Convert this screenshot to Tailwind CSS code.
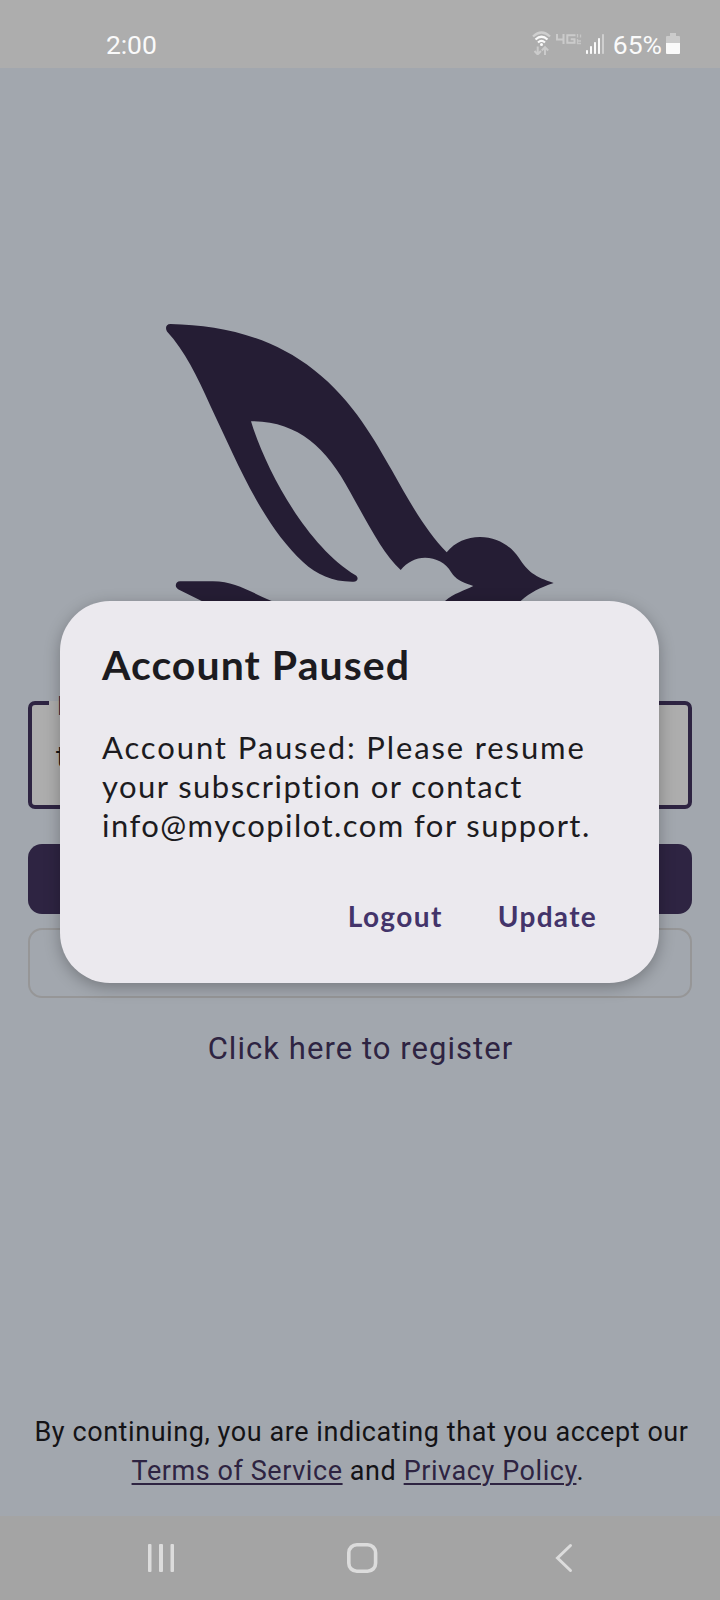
<!DOCTYPE html>
<html lang="en">
<head>
<meta charset="utf-8">
<title>Account Paused</title>
<script src="https://cdn.jsdelivr.net/npm/@tailwindcss/browser@4"></script>
</head>
<body class="bg-[#a2a7ae]">
<div class="relative flex h-[1600px] w-[720px] flex-col overflow-hidden bg-[#a2a7ae] font-['Roboto',sans-serif]">
  <!-- status bar -->
  <header class="flex h-[68px] shrink-0 items-start bg-[#adadad] pl-[106px] pr-[40px] pt-[29px] text-[26.5px] leading-[32px] text-[#fafafa]">
    <span class="tracking-[-0.1px]">2:00</span>
    <svg class="ml-auto h-[26px] w-[50px] shrink-0" viewBox="532 29 50 26" fill="none">
      <path d="M533 36.5Q541.500 28.500 550 36.500" stroke="#cfcfcf" stroke-width="2.300"/>
      <path d="M535.500 39.500Q541.500 34 547.500 39.500M538 42.500Q541.500 39.300 545 42.500" stroke="#fafafa" stroke-width="2.200"/>
      <circle cx="541.500" cy="44.500" r="1.500" fill="#fafafa"/>
      <path d="M537.700 46.500V54M534.500 51l3.200 3.400 3.200-3.400M545 55V47.500M541.800 50.500l3.200-3.400 3.200 3.400" stroke="#cbcbcb" stroke-width="2"/>
      <path d="M557 34v5.500h6.500M563.500 34v10M575.500 35.200h-8.200v7.600h7.200v-3.600h-3.800" stroke="#cbcbcb" stroke-width="2"/>
      <path d="M577.500 34v3.500M580.500 34.500v3M577.500 39v4.500h3.500M578 41h3" stroke="#c6c6c6" stroke-width="1.300"/>
    </svg>
    <svg class="ml-1 mt-[5px] h-[20px] w-[18px] shrink-0" viewBox="0 0 18 20" fill="#fafafa">
      <rect y="16" width="2" height="4" rx=".8"/><rect x="4" y="12" width="2" height="8" rx=".8"/><rect x="8" y="8" width="2" height="12" rx=".8"/><rect x="12" y="4" width="2" height="16" rx=".8"/><rect x="16" width="2" height="20" rx=".8" fill="#cfcfcf"/>
    </svg>
    <span class="ml-[9px] tracking-[0px]">65%</span>
    <svg class="ml-[4px] mt-[4px] h-[22px] w-[14px] shrink-0" viewBox="0 0 14 22">
      <path d="M4 0h6v3h3q1 0 1 1v6H0V4q0-1 1-1h3z" fill="#cbcbcb"/><path d="M0 10h14v10q0 1-1 1H1q-1 0-1-1z" fill="#fafafa"/>
    </svg>
  </header>

  <!-- login screen -->
  <main class="flex flex-1 flex-col px-7 pt-[252px]">
    <svg class="ml-[132px] h-[300px] w-[400px] shrink-0" viewBox="160 320 400 300" fill="#251d34">
      <path d="M170.500 324C222 325 272 337 314 370C354 401 376 443 391.700 470C410 503 426 531 446.700 552.300C455 542 467 537 480 537C497 537 511 546 519 558C527 571 535 577 553.700 583C539 588 531 592 520.700 601L505 620H430L445 601C454 593 464 591 473.300 586C459 581 456 579 451 572C446 563 436 557.700 425 557.700C416 557.700 407 562 400.700 570C383 554 367 522 350 491.700C326 447 297 421 251 421.300C265 467 305 545 356 575.500C359 578 357.500 581.700 353.500 581.700C333 582 317 575 303.300 562.300C262 524 238 464 210 405C197 376 185 351 167 331.500C165 328 166 324 170.500 324Z"/>
      <path d="M180 581.200H213C235 581.200 248 591 271.700 601L310 618H240L201.700 601L178.500 589.500C174 587 175.500 581.200 180 581.200Z"/>
    </svg>
    <div class="relative mt-[81px] h-[108px] shrink-0 rounded-[7px] border-4 border-[#2e2442] bg-[#adadad] pl-6 pt-[32px] text-[30px] leading-[40px] text-[#171619]">
      <span class="absolute left-[17px] top-[-4px] h-1 w-20 bg-[#adadad]"></span>
      <span class="absolute left-[25px] top-[-17px] text-[26px] leading-[36px] text-[#2e2442]">Email</span>
      <span>t</span>
    </div>
    <div class="mt-[35px] h-[70px] shrink-0 rounded-[14px] bg-[#2e2442]"></div>
    <div class="mt-[14px] h-[70px] shrink-0 rounded-[14px] border-2 border-[#969697]"></div>
    <a class="mt-[31px] pl-px text-center text-[31px] leading-[40px] tracking-[1.050px] text-[#2e2442]">Click here to register</a>
    <p class="-mx-6 mb-[25px] mt-auto whitespace-nowrap pl-[3px] text-center text-[27px] leading-[39px] tracking-[0.570px] text-[#141316]">By continuing, you are indicating that you accept our<br><a class="text-[#2e2442] underline decoration-2 underline-offset-[3px]">Terms of Service</a> and <a class="text-[#2e2442] underline decoration-2 underline-offset-[3px]">Privacy Policy</a>.&nbsp;</p>
  </main>

  <!-- system navigation -->
  <nav class="flex h-[84px] shrink-0 items-center bg-[#a4a4a4] pl-[147px] text-[#dcdcdc]">
    <svg class="h-[30px] w-[28px]" viewBox="0 0 28 30" fill="currentColor"><rect x="1" y="1" width="3.500" height="28" rx="1"/><rect x="12" y="1" width="4" height="28" rx="1"/><rect x="23.500" y="1" width="3.500" height="28" rx="1"/></svg>
    <svg class="ml-[171px] h-[32px] w-[32px]" viewBox="0 0 32 32" fill="none" stroke="currentColor" stroke-width="3.600"><rect x="2.800" y="2.800" width="26.800" height="26.400" rx="8"/></svg>
    <svg class="ml-[176px] h-[30px] w-[20px]" viewBox="0 0 20 30" fill="none" stroke="currentColor" stroke-width="3" stroke-linecap="round"><path d="M16.500 2.500 3.500 15l13 12.500"/></svg>
  </nav>

  <!-- dialog -->
  <section role="dialog" class="absolute left-[60px] top-[601px] flex h-[382px] w-[599px] flex-col rounded-[50px] bg-[#ebe9ee] px-[42px] pt-[39px] font-['Lato',sans-serif] text-[#1c1b20] shadow-[0_4px_16px_rgba(0,0,0,0.28)]">
    <h1 class="whitespace-nowrap text-[41px] font-bold leading-[50px] tracking-[1.050px]">Account Paused</h1>
    <div class="mt-[38px] flex flex-col whitespace-nowrap text-[31px] leading-[39px]">
      <span class="tracking-[1.880px]">Account Paused: Please resume</span>
      <span class="tracking-[1.450px]">your subscription or contact</span>
      <span class="tracking-[1.450px]">info@mycopilot.com for support.</span>
    </div>
    <div class="mt-[53px] flex justify-end gap-[55px] pr-[20px] text-[28px] font-bold leading-[36px] text-[#43346a]">
      <span class="tracking-[1.400px]">Logout</span><span class="tracking-[1.300px]">Update</span>
    </div>
  </section>
</div>
</body>
</html>
